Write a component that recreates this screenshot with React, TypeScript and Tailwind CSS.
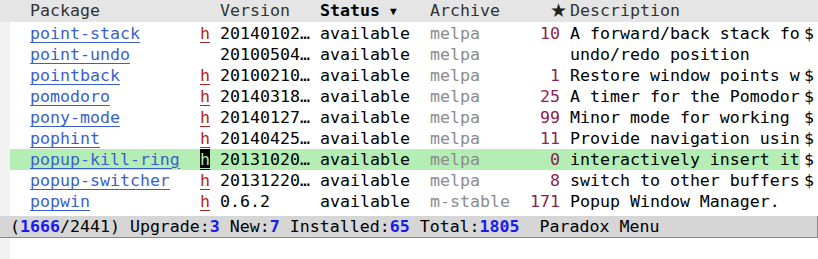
import React from 'react';

interface Pkg {
  name: string;
  home: boolean;
  version: string;
  archive: string;
  stars: string;
  desc: string;
  more: boolean;
}

const packages: Pkg[] = [
  { name: 'point-stack', home: true, version: '20140102…', archive: 'melpa', stars: '10', desc: 'A forward/back stack fo', more: true },
  { name: 'point-undo', home: false, version: '20100504…', archive: 'melpa', stars: '', desc: 'undo/redo position', more: false },
  { name: 'pointback', home: true, version: '20100210…', archive: 'melpa', stars: '1', desc: 'Restore window points w', more: true },
  { name: 'pomodoro', home: true, version: '20140318…', archive: 'melpa', stars: '25', desc: 'A timer for the Pomodor', more: true },
  { name: 'pony-mode', home: true, version: '20140127…', archive: 'melpa', stars: '99', desc: 'Minor mode for working', more: true },
  { name: 'pophint', home: true, version: '20140425…', archive: 'melpa', stars: '11', desc: 'Provide navigation usin', more: true },
  { name: 'popup-kill-ring', home: true, version: '20131020…', archive: 'melpa', stars: '0', desc: 'interactively insert it', more: true },
  { name: 'popup-switcher', home: true, version: '20131220…', archive: 'melpa', stars: '8', desc: 'switch to other buffers', more: true },
  { name: 'popwin', home: true, version: '0.6.2', archive: 'm-stable', stars: '171', desc: 'Popup Window Manager.', more: false },
];

const CURRENT = 6;

function Row({ pkg, current }: { pkg: Pkg; current: boolean }) {
  return (
    <div className="flex h-[21px] leading-[21px] whitespace-pre">
      <div className={`flex w-[790px] ${current ? 'bg-[#b4eeb4]' : ''}`}>
        <span className="w-[20px]" />
        <span className="w-[170px] overflow-hidden">
          <span className="text-[#3a5fcd] underline underline-offset-[3px]">{pkg.name}</span>
        </span>
        <span className="w-[10px]">
          {pkg.home && (
            <span
              className={`underline underline-offset-[3px] ${
                current ? 'bg-black text-[#b4eeb4] inline-block w-[10px] h-[21px]' : 'text-[#b22222]'
              }`}
            >
              h
            </span>
          )}
        </span>
        <span className="w-[10px]" />
        <span className="w-[100px] overflow-hidden">{pkg.version}</span>
        <span className="w-[110px]">available</span>
        <span className="w-[100px] text-[#8c8c8c]">{pkg.archive}</span>
        <span className="w-[30px] text-right text-[#8b2252]">{pkg.stars}</span>
        <span className="w-[10px]" />
        <span className="w-[230px] overflow-hidden">{pkg.desc}</span>
      </div>
      <span className="w-[10px] ml-[4px]">{pkg.more ? '$' : ''}</span>
    </div>
  );
}

export default function App() {
  return (
    <div
      className="w-[818px] h-[259px] overflow-hidden bg-white text-black text-[16.6px] flex flex-col"
      style={{ fontFamily: '"DejaVu Sans Mono", monospace' }}
    >
      <div className="flex h-[22px] leading-[21px] bg-[#e5e5e5] text-[#333333] whitespace-pre shrink-0">
        <span className="w-[30px]" />
        <span className="w-[190px]">Package</span>
        <span className="w-[100px]">Version</span>
        <span className="w-[110px] text-black">
          <span className="font-bold">Status</span> <span className="text-[11px] align-[1px]">▼</span>
        </span>
        <span className="w-[120px]">Archive</span>
        <span
          className="w-[20px] text-[19px] leading-[21px] text-[#222222]"
          style={{ fontFamily: '"DejaVu Sans", sans-serif' }}
        >
          ★
        </span>
        <span>Description</span>
      </div>

      <div className="flex h-[194px] shrink-0 overflow-hidden">
        <div className="w-[10px] bg-[#f2f2f2]" />
        <div className="pt-[1px]">
          {packages.map((p, i) => (
            <Row key={p.name} pkg={p} current={i === CURRENT} />
          ))}
        </div>
      </div>

      <div className="h-[22px] shrink-0 flex bg-[#d6d6d6] border-b border-r border-[#8a8a8a] leading-[21px] whitespace-pre">
        <span className="w-[10px]" />
        <span>
          (<b className="text-[#1a1aee]">1666</b>/2441) Upgrade:<b className="text-[#1a1aee]">3</b> New:
          <b className="text-[#1a1aee]">7</b> Installed:<b className="text-[#1a1aee]">65</b> Total:
          <b className="text-[#1a1aee]">1805</b>  Paradox Menu
        </span>
      </div>

      <div className="flex flex-1">
        <div className="w-[10px] bg-[#f2f2f2]" />
      </div>
    </div>
  );
}
